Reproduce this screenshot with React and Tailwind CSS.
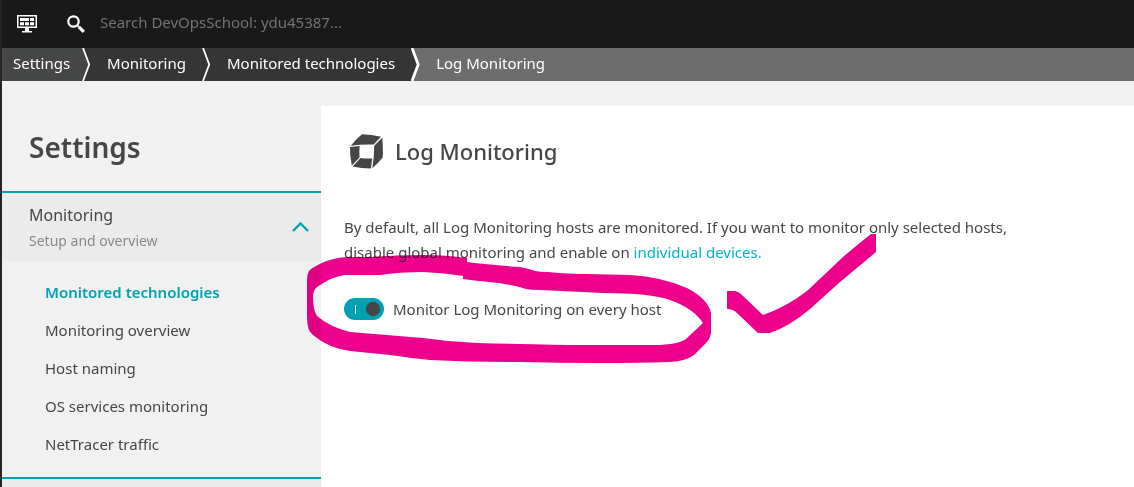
import { useState } from 'react';

const crumbs = [
  { label: 'Settings', bg: 'bg-[#454646]', fill: 'fill-[#454646]', pad: 'pl-[11px] pr-3' },
  { label: 'Monitoring', bg: 'bg-[#353535]', fill: 'fill-[#353535]', pad: 'px-4' },
  { label: 'Monitored technologies', bg: 'bg-[#353535]', fill: 'fill-[#353535]', pad: 'px-4' },
  { label: 'Log Monitoring', bg: 'bg-[#6d6d6d]', fill: 'fill-[#6d6d6d]', pad: 'px-4' },
];

const menuItems = [
  'Monitored technologies',
  'Monitoring overview',
  'Host naming',
  'OS services monitoring',
  'NetTracer traffic',
];

function DashboardIcon() {
  return (
    <svg viewBox="0 0 20 18" className="w-5 h-[18px]" aria-hidden="true">
      <path fill="#fff" fillRule="evenodd" d="M0 0h20v13H0zM1.500 1.500v10h17v-10z" />
      <path fill="#fff" d="M3 3h9v3H3zM13 3h4v3h-4zM3 7.200h4v3H3zM8 7.200h4v3H8zM13 7.200h4v3h-4z" />
      <path fill="#fff" d="M8 13h4v3h3v1.500H5V16h3z" />
    </svg>
  );
}

function SearchIcon() {
  return (
    <svg viewBox="0 0 18 18" className="w-[18px] h-[18px]" fill="none" stroke="#fff" aria-hidden="true">
      <circle cx="6.5" cy="6.5" r="5.2" strokeWidth="2.2" />
      <path d="M10.3 10.3l1.4 1.4" strokeWidth="1.6" />
      <path d="M11.8 11.8l5 5" strokeWidth="3.2" />
    </svg>
  );
}

function CubeIcon() {
  return (
    <svg viewBox="0 0 34 36" className="w-[34px] h-9 shrink-0" fill="#454646" aria-hidden="true">
      <path d="M13 1.300Q22.500 1.500 32 3.700L24.700 11.500Q13 11 1.800 12.800Q7 6 13 1.300z" />
      <path d="M33.200 4.800Q34.300 15 33.700 24.500Q29 30.500 23.300 35.200Q25.300 24 25.200 12.700z" />
      <path d="M1 13.900L10.600 13.100Q10.200 19 10.500 24.500L2.800 32.600Q.8 23 1 13.900z" />
      <path d="M11.500 25Q17 25.700 23.200 25.500L21.900 35.500Q12.500 35.300 3.600 33.400z" />
    </svg>
  );
}

function Separator({ from, to, bold }) {
  return (
    <svg viewBox="0 0 9 33" className={`w-[9px] h-[33px] shrink-0 ${to}`} aria-hidden="true">
      <path d="M0 0h9v33H0z" />
      <path className={from} d="M0 0h1l6 16.500L1 33H0z" />
      <path d="M1 0l6.200 16.500L1 33" fill="none" stroke="#fff" strokeWidth={bold ? 2.8 : 1.8} />
    </svg>
  );
}

// Hand-drawn marker strokes over the page
function MarkerInk() {
  return (
    <svg
      viewBox="300 226 584 144"
      className="absolute left-[298px] top-[226px] w-[584px] h-36 pointer-events-none mix-blend-multiply"
      fill="#ec008c"
      aria-hidden="true"
    >
      <path
        fillRule="evenodd"
        d="M307 280Q307 272 311 269Q322 262 330 260Q339 257 350 257L370 257Q397 255 423 255Q446 255 467 258V262Q490 265 520 267Q530 269 535 271Q540 272 548 272Q570 274 587 274L630 275Q662 277 687 288Q708 299 711 313V333Q710 340 704 345L694 355Q686 361 670 362Q640 363 597 363Q560 363 520 362Q470 362 430 360Q410 358 390 355L350 351Q328 348 313 335Q307 331 307 317z
           M313 297Q313 290 317 287Q333 276 345 275L380 275Q400 272 423 272Q445 273 463 276V279Q476 281 490 282Q510 284 526 289Q532 290 540 290L603 293Q650 293 670 300Q693 308 703 323L687 338Q680 345 653 345L587 345Q550 345 477 343Q450 342 423 338L350 332Q330 327 317 316Q313 310 313 297z"
      />
      <path d="M727 291H734Q738 291 743 296L763 315Q786 307 807 291Q824 275 843 257Q857 245 871 234H876V252L840 282L810 309Q790 326 770 333H758L737 313Q733 309 727 309z" />
    </svg>
  );
}

function TopBar() {
  return (
    <header className="h-12 bg-[#191919] flex items-center">
      <button type="button" aria-label="Dashboards" className="ml-[15px] shrink-0">
        <DashboardIcon />
      </button>
      <label htmlFor="search" aria-label="Search" className="ml-[30px] shrink-0">
        <SearchIcon />
      </label>
      <input
        id="search"
        type="text"
        placeholder="Search DevOpsSchool: ydu45387..."
        className="ml-[15px] h-11 mb-1 flex-1 min-w-0 bg-transparent text-[15px] leading-[22px] text-white placeholder:text-[#737373] outline-none"
      />
    </header>
  );
}

function Breadcrumbs() {
  return (
    <nav aria-label="Breadcrumb" className="bg-[#6d6d6d]">
      <ol className="flex">
        {crumbs.map((crumb, i) => (
          <li key={crumb.label} className="flex">
            <a href="#" className={`h-[33px] text-[15px] leading-[30px] text-white whitespace-nowrap ${crumb.bg} ${crumb.pad}`}>
              {crumb.label}
            </a>
            {i < crumbs.length - 1 && (
              <Separator from={crumb.fill} to={crumbs[i + 1].fill} bold={i === crumbs.length - 2} />
            )}
          </li>
        ))}
      </ol>
    </nav>
  );
}

function Sidebar() {
  const [open, setOpen] = useState(true);

  return (
    <aside className="w-[319px] shrink-0 bg-[#f1f1f1] flex flex-col">
      <h1 className="pl-[27px] pt-12 pb-[26px] text-[28px] leading-9 font-semibold">Settings</h1>
      <button
        type="button"
        aria-expanded={open}
        onClick={() => setOpen(!open)}
        className="border-t-2 border-[#00a1b2] bg-[#ebebeb] h-[70px] pl-[27px] pr-3 flex items-center justify-between text-left"
      >
        <span>
          <span className="block text-base leading-7">Monitoring</span>
          <span className="block text-sm leading-6 text-[#898989]">Setup and overview</span>
        </span>
        <svg viewBox="0 0 17 10" className="w-[17px] h-2.5" fill="none" stroke="#00a1b2" strokeWidth="2.400" aria-hidden="true">
          <path d={open ? 'M1 9l7.500-7.500L16 9' : 'M1 1l7.500 7.500L16 1'} />
        </svg>
      </button>
      {open && (
        <ul className="pt-3 pb-[14px] pl-[43px] text-[15px] leading-[38px]">
          {menuItems.map((item, i) => (
            <li key={item}>
              <a href="#" className={i === 0 ? 'font-semibold text-[#00a1b2]' : ''}>{item}</a>
            </li>
          ))}
        </ul>
      )}
      <div className="flex-1 min-h-2 border-t-2 border-[#00a1b2] bg-[#ebebeb]" />
    </aside>
  );
}

export default function App() {
  const [enabled, setEnabled] = useState(true);

  return (
    <div className="relative min-h-screen flex flex-col border-l-2 border-[#252525] bg-[#f1f1f1] font-['Noto_Sans',sans-serif] text-[#454646]">
      <TopBar />
      <Breadcrumbs />
      <div className="flex-1 flex">
        <Sidebar />
        <main className="flex-1 min-w-0 mt-[25px] bg-white px-[23px] pt-[27px]">
          <div className="flex items-center gap-3 pl-[5px]">
            <CubeIcon />
            <h2 className="text-[22px] leading-[34px] font-medium">Log Monitoring</h2>
          </div>
          <p className="mt-[46px] max-w-[690px] text-[15px] leading-[25px]">
            By default, all Log Monitoring hosts are monitored. If you want to monitor only selected hosts, disable
            global monitoring and enable on <a href="#" className="text-[#00b4c8]">individual devices.</a>
          </p>
          <div className="mt-8 flex items-center gap-[9px]">
            <span className="relative flex">
              <input
                id="monitor-all"
                type="checkbox"
                checked={enabled}
                onChange={() => setEnabled(!enabled)}
                className="appearance-none w-10 h-[22px] rounded-full bg-[#898989] checked:bg-[#00a1b2]"
              />
              <svg viewBox="0 0 40 22" className="absolute inset-0 w-10 h-[22px] pointer-events-none" aria-hidden="true">
                {enabled && <path d="M11 7h1v9h-1z" fill="#fff" />}
                <circle cx={enabled ? 29 : 11} cy="11" r="7.200" fill="#454646" />
              </svg>
            </span>
            <label htmlFor="monitor-all" className="text-[15px] leading-6">Monitor Log Monitoring on every host</label>
          </div>
        </main>
      </div>
      <MarkerInk />
    </div>
  );
}
